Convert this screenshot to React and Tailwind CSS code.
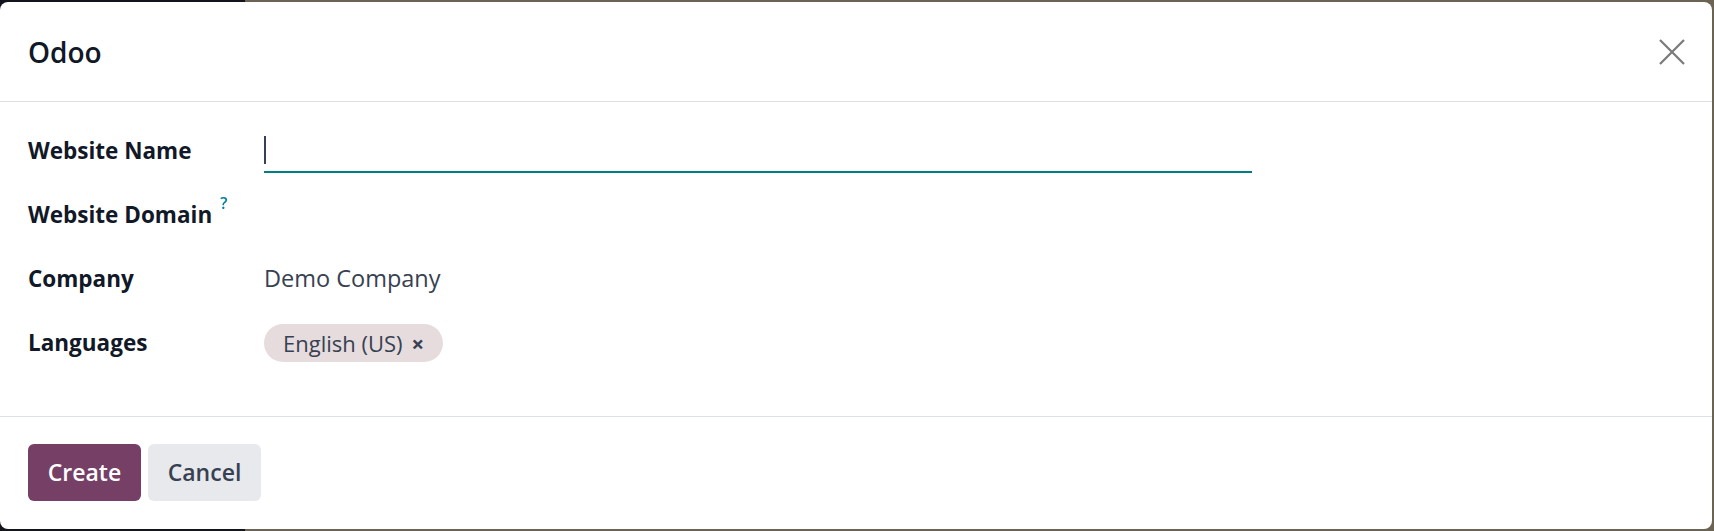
import React, { useState } from "react";

const font = { fontFamily: '"Open Sans", "Noto Sans", sans-serif' };

function Field({ label, help, top, children }) {
  return (
    <>
      <div className="flex h-[38px] items-center text-[22.5px] font-bold text-[#111827]">
        <span>{label}</span>
        {help && <sup className="ml-[8px] -mt-[9px] text-[16px] font-semibold text-[#0180a5]">?</sup>}
      </div>
      <div className={`flex h-[38px] ${top ? "items-start" : "items-center"}`}>{children}</div>
    </>
  );
}

export default function App() {
  const [name, setName] = useState("");
  const [langs, setLangs] = useState(["English (US)"]);

  return (
    <div
      className="h-[531px] w-[1714px] overflow-hidden bg-[linear-gradient(90deg,#14141d_245px,#6b6354_245px)] pt-[2px] pr-[2px]"
      style={font}
    >
      <div className="flex h-[527px] w-[1712px] flex-col rounded-lg bg-white">
        <div className="flex h-[100px] items-center justify-between border-b border-[#dee2e6] pl-[28px] pr-[17px]">
          <h1 className="text-[28px] font-semibold text-[#111827]">Odoo</h1>
          <button className="p-2 text-[#7a7a7a]">
            <svg width="30" height="30" viewBox="0 0 30 30" fill="none" stroke="currentColor" strokeWidth="2.2">
              <path d="M3 3 L27 27 M27 3 L3 27" />
            </svg>
          </button>
        </div>

        <div className="grid flex-1 grid-cols-[236px_988px] content-start gap-y-[26px] pl-[28px] pt-[30px]">
          <Field label="Website Name" top>
            <div className="relative h-[41px] w-full">
              <input
                value={name}
                onChange={(e) => setName(e.target.value)}
                autoFocus
                className="h-[41px] w-full border-b-2 border-[#017e84] bg-transparent text-[23px] text-[#374151] caret-[#374151] outline-none"
              />
              {name === "" && <span className="pointer-events-none absolute left-0 top-[4px] h-[28px] w-[1.5px] bg-[#374151]" />}
            </div>
          </Field>
          <Field label="Website Domain" help>
            <span />
          </Field>
          <Field label="Company">
            <span className="text-[23.5px] text-[#374151]">Demo Company</span>
          </Field>
          <Field label="Languages">
            {langs.map((l) => (
              <span
                key={l}
                className="flex h-[38px] items-center gap-[9px] rounded-full bg-[#e6dcde] pl-[19px] pr-[19px] text-[22px] text-[#374151]"
              >
                {l}
                <button onClick={() => setLangs(langs.filter((x) => x !== l))} className="text-[22px] font-bold">
                  ×
                </button>
              </span>
            ))}
          </Field>
        </div>

        <div className="flex gap-[7px] border-t border-[#dee2e6] pb-[28px] pl-[28px] pt-[27px]">
          <button className="h-[57px] w-[113px] rounded-md bg-[#763f66] text-[23px] font-semibold text-white">
            Create
          </button>
          <button className="h-[57px] w-[113px] rounded-md bg-[#e7e9ed] text-[23px] font-semibold text-[#374151]">
            Cancel
          </button>
        </div>
      </div>
    </div>
  );
}
